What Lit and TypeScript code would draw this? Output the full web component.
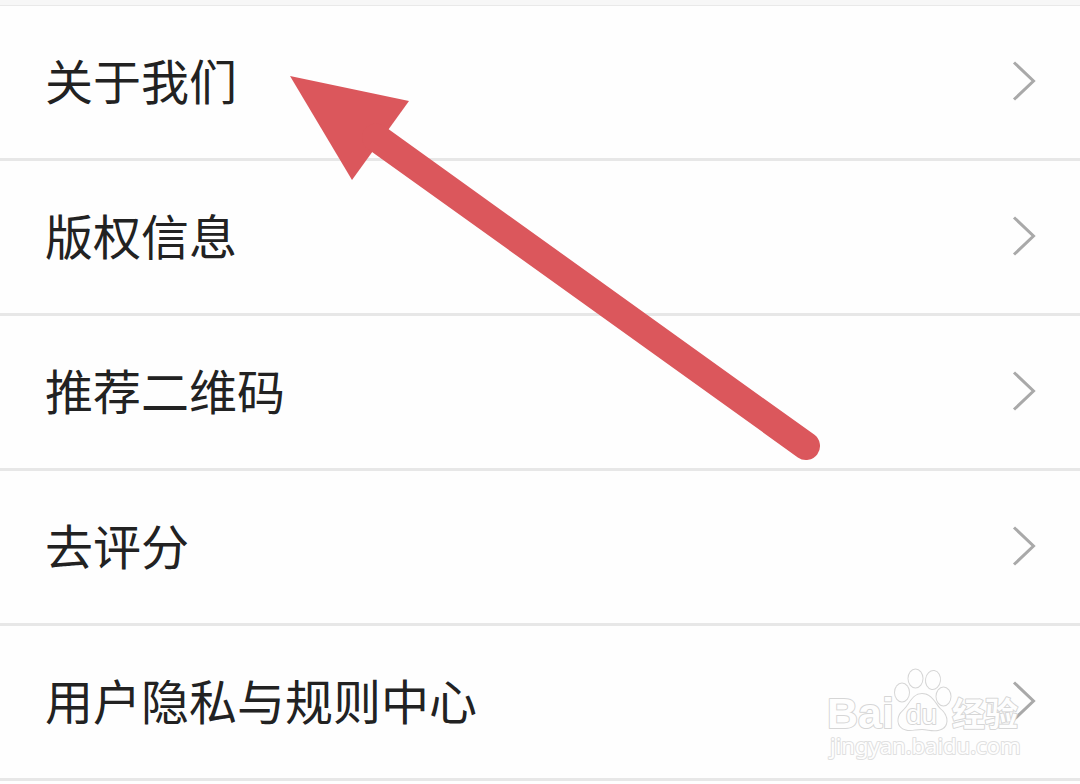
import { LitElement, html, css } from "lit";
import { customElement, property } from "lit/decorators.js";

@customElement("settings-row")
class SettingsRow extends LitElement {
  @property() label = "";

  static styles = css`
    :host {
      display: block;
      border-bottom: 3px solid #e7e7e7;
    }
    .link {
      display: flex;
      align-items: center;
      justify-content: space-between;
      padding: 40px 44px 40px 45px;
      color: #222;
      font-size: 48px;
      line-height: 66px;
      text-decoration: none;
    }
    .label {
      padding-bottom: 6px;
    }
    .chevron {
      display: block;
      flex: none;
      width: 24px;
      height: 42px;
      fill: none;
      stroke: #a9a9a9;
      stroke-width: 3;
    }
  `;

  render() {
    return html`<a class="link" href="#">
      <span class="label">${this.label}</span>
      <svg class="chevron" viewBox="0 0 24 42" aria-hidden="true">
        <path d="M2 1.500 21.500 20 2 38.500" />
      </svg>
    </a>`;
  }
}

@customElement("app-root")
class AppRoot extends LitElement {
  static styles = css`
    :host {
      display: block;
      position: relative;
      min-height: 100vh;
      overflow: hidden;
      background: #fefefe;
      font-family: "Noto Sans CJK SC", sans-serif;
    }
    .strip {
      height: 5px;
      background: #f7f7f7;
      border-bottom: 1px solid #e9e9e9;
    }
    .arrow {
      position: absolute;
      left: 280px;
      top: 66px;
      width: 550px;
      height: 404px;
      pointer-events: none;
    }
    .watermark {
      position: absolute;
      right: 50px;
      top: 664px;
      width: 210px;
      height: 100px;
      pointer-events: none;
      fill: #fefefe;
      stroke: #d6d6d6;
      stroke-width: 2;
      stroke-linejoin: round;
      paint-order: stroke;
    }
    .brand {
      font: bold 43px "Liberation Sans", sans-serif;
    }
    .du {
      font: 28px "Liberation Sans", sans-serif;
    }
    .han {
      font: bold 33px "Noto Sans CJK SC", sans-serif;
    }
    .site {
      font: 22px "Noto Sans", sans-serif;
      stroke: #e0e0e0;
    }
  `;

  private rows = ["关于我们", "版权信息", "推荐二维码", "去评分", "用户隐私与规则中心"];

  render() {
    return html`
      <div class="strip"></div>
      <nav>${this.rows.map((r) => html`<settings-row .label=${r}></settings-row>`)}</nav>
      <svg class="arrow" viewBox="280 66 550 404" aria-hidden="true">
        <path d="M290 76 409 101 352 180Z" fill="#db575c" />
        <path d="M376 137.500 806 446" fill="none" stroke="#db575c" stroke-width="28" stroke-linecap="round" />
      </svg>
      <svg class="watermark" viewBox="820 664 210 100">
        <text class="brand" x="827" y="728">Bai</text>
        <ellipse cx="902" cy="692.500" rx="7" ry="9" />
        <ellipse cx="915.500" cy="678.500" rx="7" ry="9" />
        <ellipse cx="933" cy="680" rx="7" ry="9" transform="rotate(8 933 680)" />
        <ellipse cx="943.500" cy="696.500" rx="7" ry="9" />
        <path d="M922 694C932 694 935 704 940 709C949 716 949 728 938 730C931 731 928 729 922 729C915 729 911 731 906 729.500C896 727 897 716 903 711C910 705 912 694 922 694Z" />
        <text class="du" x="906" y="724">du</text>
        <text class="han" x="952" y="726">经验</text>
        <text class="site" x="830" y="754">jingyan.baidu.com</text>
      </svg>
    `;
  }
}
